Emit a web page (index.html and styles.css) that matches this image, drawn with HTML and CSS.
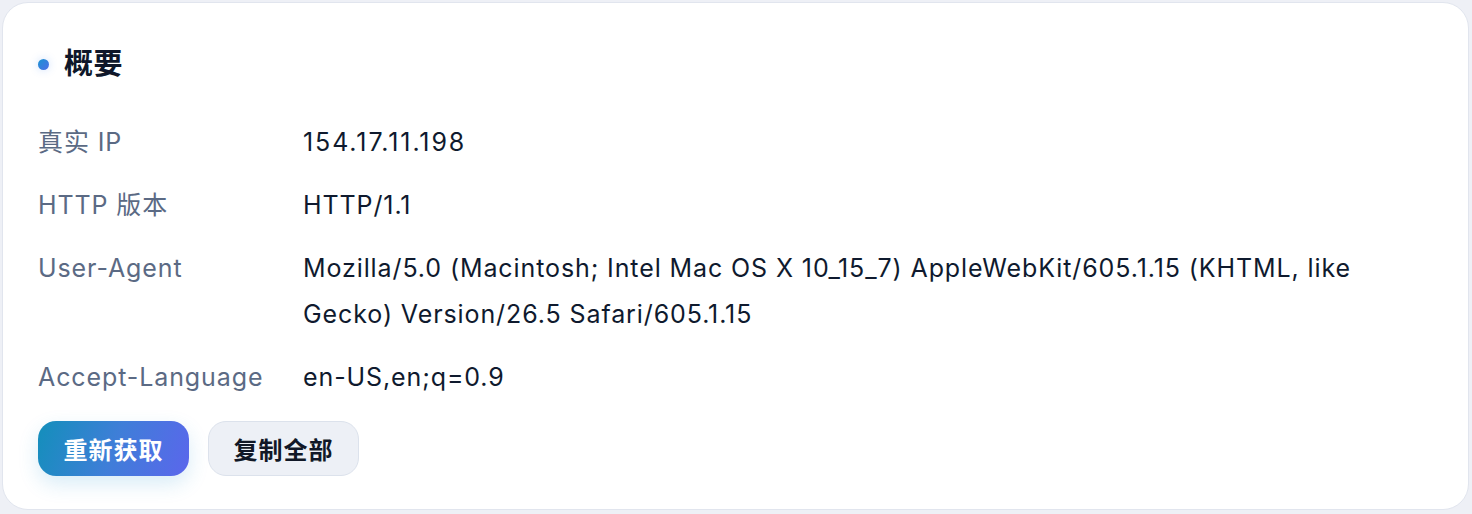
FILE: index.html
```html
<!DOCTYPE html>
<html lang="zh-CN">
<head>
<meta charset="utf-8">
<title>概要</title>
<link rel="stylesheet" href="styles.css">
</head>
<body>
<section class="card">
  <h2 class="title"><span class="dot"></span>概要</h2>
  <dl class="info">
    <dt>真实 IP</dt>
    <dd class="ip">154.17.11.198</dd>
    <dt>HTTP 版本</dt>
    <dd>HTTP/1.1</dd>
    <dt>User-Agent</dt>
    <dd>Mozilla/5.0 (Macintosh; Intel Mac OS X 10_15_7) AppleWebKit/605.1.15 (KHTML, like Gecko) Version/26.5 Safari/605.1.15</dd>
    <dt>Accept-Language</dt>
    <dd>en-US,en;q=0.9</dd>
  </dl>
  <div class="actions">
    <button class="btn btn-primary">重新获取</button>
    <button class="btn btn-secondary">复制全部</button>
  </div>
</section>
</body>
</html>
```
FILE: styles.css
```css
* { box-sizing: border-box; }
html, body { margin: 0; }
body {
  background: #eef0f6;
  padding: 2px 3px 3px 2px;
  font-family: Inter, "Noto Sans CJK SC", sans-serif;
}
.card {
  background: #ffffff;
  border: 1px solid #e1e5ee;
  border-radius: 26px;
  padding: 41px 36px 33px 35px;
}
.title {
  display: flex;
  align-items: center;
  gap: 15px;
  margin: 0;
  font-size: 29px;
  letter-spacing: 0.5px;
  line-height: 40px;
  font-weight: 700;
  color: #0f172a;
}
.dot {
  width: 11px;
  height: 11px;
  border-radius: 50%;
  background: linear-gradient(135deg, #1a94d2, #4f6ee8);
  box-shadow: 0 0 8px rgba(59, 130, 246, 0.25);
}
.info {
  display: grid;
  grid-template-columns: 265px 1fr;
  row-gap: 17px;
  margin: 35px 0 0;
  font-size: 25px;
  letter-spacing: 0.9px;
  line-height: 46px;
}
.info dt {
  color: #5b6a84;
}
.info dd {
  margin: 0;
  color: #0f1a2e;
}
.info .ip {
  letter-spacing: 1.9px;
}
.actions {
  display: flex;
  gap: 19px;
  margin-top: 21px;
}
.btn {
  height: 55px;
  width: 151px;
  border-radius: 18px;
  font-family: Inter, "Noto Sans CJK SC", sans-serif;
  font-size: 24px;
  letter-spacing: 1px;
  font-weight: 700;
  cursor: pointer;
}
.btn-primary {
  border: none;
  color: #ffffff;
  background: linear-gradient(110deg, #138fbb 0%, #3f7ed8 50%, #5b66ec 100%);
  box-shadow: 0 8px 20px rgba(40, 150, 210, 0.18);
}
.btn-secondary {
  border: 1.5px solid #dce2ec;
  color: #111827;
  background: #edf0f6;
}
```
